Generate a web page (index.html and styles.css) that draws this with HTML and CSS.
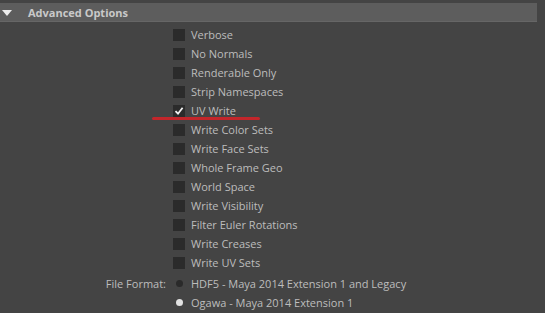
FILE: index.html
```html
<!DOCTYPE html>
<html>
<head>
<meta charset="utf-8">
<link rel="stylesheet" href="styles.css">
</head>
<body>
<div class="panel">
  <div class="header">
    <svg class="tri" width="10" height="6" viewBox="0 0 10 6"><polygon points="0,0 10,0 5,6" fill="#ececec"/></svg>
    <span class="title">Advanced Options</span>
  </div>
  <div class="list">
    <div class="row"><span class="label"></span><span class="box"></span><span class="text">Verbose</span></div>
    <div class="row"><span class="label"></span><span class="box"></span><span class="text">No Normals</span></div>
    <div class="row"><span class="label"></span><span class="box"></span><span class="text">Renderable Only</span></div>
    <div class="row"><span class="label"></span><span class="box"></span><span class="text">Strip Namespaces</span></div>
    <div class="row"><span class="label"></span><span class="box checked"><svg width="12" height="12" viewBox="0 0 12 12"><polyline points="2.5,6.2 5,8.7 9.6,2.8" fill="none" stroke="#f2f2f2" stroke-width="1.8"/></svg></span><span class="text">UV Write</span></div>
    <div class="row"><span class="label"></span><span class="box"></span><span class="text">Write Color Sets</span></div>
    <div class="row"><span class="label"></span><span class="box"></span><span class="text">Write Face Sets</span></div>
    <div class="row"><span class="label"></span><span class="box"></span><span class="text">Whole Frame Geo</span></div>
    <div class="row"><span class="label"></span><span class="box"></span><span class="text">World Space</span></div>
    <div class="row"><span class="label"></span><span class="box"></span><span class="text">Write Visibility</span></div>
    <div class="row"><span class="label"></span><span class="box"></span><span class="text">Filter Euler Rotations</span></div>
    <div class="row"><span class="label"></span><span class="box"></span><span class="text">Write Creases</span></div>
    <div class="row"><span class="label"></span><span class="box"></span><span class="text">Write UV Sets</span></div>
    <div class="radios">
      <div class="row"><span class="label">File Format:</span><span class="radio-cell"><span class="radio"></span></span><span class="text">HDF5 - Maya 2014 Extension 1 and Legacy</span></div>
      <div class="row"><span class="label"></span><span class="radio-cell"><span class="radio on"></span></span><span class="text">Ogawa - Maya 2014 Extension 1</span></div>
    </div>
  </div>
  <div class="redline"></div>
</div>
</body>
</html>
```
FILE: styles.css
```css
html, body {
  margin: 0;
  padding: 0;
  background: #444444;
}
body {
  width: 545px;
  height: 313px;
  overflow: hidden;
  font-family: "Open Sans", "Noto Sans", sans-serif;
  font-size: 11px;
}
.panel {
  position: relative;
  padding-top: 3px;
}
.header {
  width: 537px;
  height: 19px;
  background: #5d5d5d;
  border-bottom: 1px solid #666;
  box-sizing: border-box;
  display: flex;
  align-items: center;
}
.tri {
  margin-left: 2px;
  margin-top: 1px;
}
.title {
  margin-left: 16px;
  color: #c9c9c9;
  font-weight: bold;
  font-size: 11px;
}
.list {
  padding-top: 3px;
}
.row {
  height: 19px;
  display: flex;
  align-items: center;
}
.label {
  width: 166px;
  text-align: right;
  color: #bdbdbd;
  box-sizing: border-box;
}
.box {
  width: 12px;
  height: 12px;
  margin-left: 7px;
  background: #2b2b2b;
  display: flex;
}
.text {
  margin-left: 6px;
  color: #bdbdbd;
}
.radios {
  padding-top: 2px;
}
.radio-cell {
  width: 12px;
  margin-left: 7px;
  display: flex;
  justify-content: center;
}
.radio {
  width: 7px;
  height: 7px;
  border-radius: 50%;
  background: #2a2a2a;
}
.radio.on {
  background: #e2e2e2;
}
.redline {
  position: absolute;
  left: 152px;
  top: 117px;
  width: 108px;
  height: 3px;
  border-radius: 2px;
  background: #c3262b;
}
```
